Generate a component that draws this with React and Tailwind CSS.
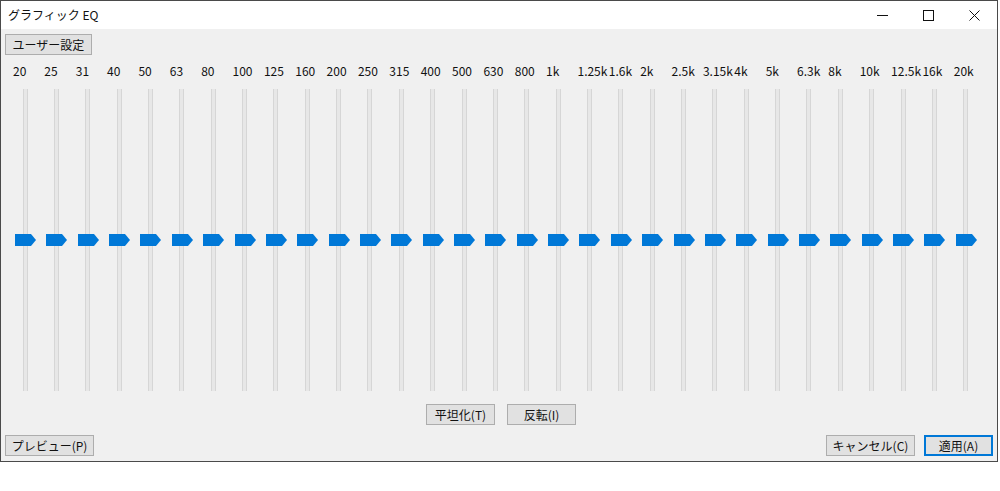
import React from 'react'

const bands = ['20', '25', '31', '40', '50', '63', '80', '100', '125', '160', '200', '250', '315', '400', '500', '630', '800', '1k', '1.25k', '1.6k', '2k', '2.5k', '3.15k', '4k', '5k', '6.3k', '8k', '10k', '12.5k', '16k', '20k']

const font = { fontFamily: '"Noto Sans CJK JP", "Noto Sans", sans-serif' }

function Btn({ children, className = '', primary = false }) {
  return (
    <button
      className={`h-[21px] text-[12px] leading-none text-[#111] bg-[#e1e1e1] border ${primary ? 'border-[#0078d7] border-2' : 'border-[#adadad]'} flex items-center justify-center ${className}`}
    >
      {children}
    </button>
  )
}

function Slider({ label }) {
  return (
    <div className="w-[22px] flex flex-col items-center">
      <div className="w-full h-[22px] flex items-end">
        <span className="-ml-px whitespace-nowrap text-[12px] leading-none text-[#111]">{label}</span>
      </div>
      <div className="relative mt-[12px] h-[302px] w-full flex justify-center">
        <div className="w-[5px] h-full bg-[#e7e7e7] border-x border-[#d6d6d6]" />
        <svg className="absolute left-[1px] top-[145px]" width="21" height="12" viewBox="0 0 21 12">
          <polygon points="0,0 16,0 21,6 16,12 0,12" fill="#0078d7" />
        </svg>
      </div>
    </div>
  )
}

export default function App() {
  return (
    <div className="w-[1000px] h-[491px] bg-white" style={font}>
      <div className="w-[998px] h-[462px] border border-[#4a4a4a] bg-[#f0f0f0] flex flex-col">
        <div className="h-[28px] bg-white flex items-center justify-between shrink-0">
          <span className="pl-[7px] text-[12px] text-[#111]">グラフィック EQ</span>
          <div className="flex h-full items-center">
            <div className="w-[46px] flex justify-center">
              <svg width="11" height="11" viewBox="0 0 11 11"><line x1="0" y1="5.5" x2="11" y2="5.5" stroke="#111" strokeWidth="1" /></svg>
            </div>
            <div className="w-[46px] flex justify-center">
              <svg width="11" height="11" viewBox="0 0 11 11"><rect x="0.5" y="0.5" width="10" height="10" fill="none" stroke="#111" strokeWidth="1" /></svg>
            </div>
            <div className="w-[46px] flex justify-center">
              <svg width="11" height="11" viewBox="0 0 11 11"><path d="M0.5 0.5 L10.5 10.5 M10.5 0.5 L0.5 10.5" stroke="#111" strokeWidth="1" /></svg>
            </div>
          </div>
        </div>

        <div className="px-[4px] pt-[5px]">
          <Btn className="w-[87px]">ユーザー設定</Btn>
        </div>

        <div className="ml-[13px] w-[963px] flex justify-between">
          {bands.map((b) => (
            <Slider key={b} label={b} />
          ))}
        </div>

        <div className="mt-[13px] flex justify-center gap-[12px] pl-[4px]">
          <Btn className="w-[69px]">平坦化(T)</Btn>
          <Btn className="w-[69px]">反転(I)</Btn>
        </div>

        <div className="mt-[10px] px-[4px] flex justify-between">
          <Btn className="w-[89px]">プレビュー(P)</Btn>
          <div className="flex gap-[9px]">
            <Btn className="w-[89px]">キャンセル(C)</Btn>
            <Btn className="w-[69px]" primary>適用(A)</Btn>
          </div>
        </div>
      </div>
    </div>
  )
}
